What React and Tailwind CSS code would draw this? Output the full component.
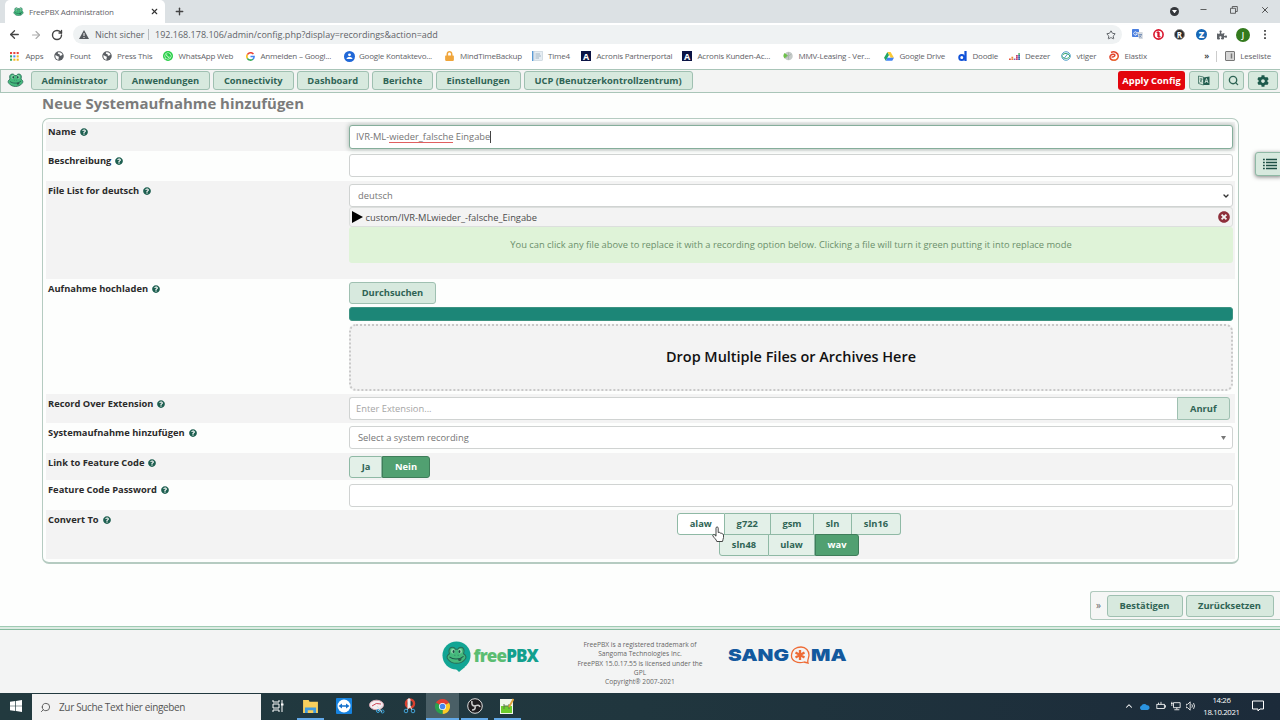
import React from 'react';
import { FaQuestionCircle, FaTimesCircle, FaCog, FaPuzzlePiece, FaWhatsapp, FaLock } from 'react-icons/fa';
import { ArrowLeft, ArrowRight, RotateCw, Star, Search, X, Plus, Minus, ChevronUp, ChevronDown } from 'lucide-react';

const Frog = ({ className = '' }) => (
  <svg viewBox="0 0 32 28" className={`shrink-0 ${className}`}>
    <path d="M5 12C3 7 5 2 9.500 2C12 2 13.500 3 14.500 5H18C19 3 20.500 2 23 2C27 2 29 7 27 12C31 15 32 18 29 21C26 25 21 27 16 27C11 27 6 25 3 21C0 18 1 15 5 12Z" fill="#45b97c" stroke="#2a6b58" strokeWidth="1.600" />
    <ellipse cx="10.500" cy="8" rx="3" ry="3.800" fill="#8fd6ad" />
    <ellipse cx="21.500" cy="8" rx="3" ry="3.800" fill="#8fd6ad" />
    <ellipse cx="11.500" cy="8.500" rx="1.500" ry="2.400" fill="#1d4a44" />
    <ellipse cx="20.500" cy="8.500" rx="1.500" ry="2.400" fill="#1d4a44" />
    <path d="M5 17C10 21 20 22 27 16" fill="none" stroke="#1d5a4c" strokeWidth="1.600" />
    <path d="M18 20.500C19 25 24 24 24 18.500Z" fill="#2d5a4c" />
    <path d="M13 14.500h1M18 14.500h1" stroke="#1d5a4c" strokeWidth="1.200" />
  </svg>
);

const Globe = () => (
  <svg viewBox="0 0 20 20" className="size-[10px]">
    <circle cx="10" cy="10" r="9.500" fill="#5a5e63" />
    <path d="M3 8C6 9 6 11 9 11C11 12 8 15 9 18C4 17 2 13 3 8ZM8 3C11 2 15 3 17 7C15 10 13 8 13 10C10 9 13 6 9 6C8 6 7 4 8 3Z" fill="#fff" />
  </svg>
);

const AppsIcon = () => (
  <svg viewBox="0 0 10 10" className="size-[9px]">
    {['#e8453c', '#e8453c', '#e8453c', '#2fa55a', '#4a8af4', '#f2b921', '#2fa55a', '#f2b921', '#f2b921'].map((c, i) => (
      <rect key={i} x={(i % 3) * 3.7} y={Math.floor(i / 3) * 3.7} width="2.300" height="2.300" fill={c} />
    ))}
  </svg>
);

const WhatsAppIcon = () => (
  <span className="flex size-[10px] items-center justify-center rounded-full bg-[#25cf45] text-white"><FaWhatsapp className="size-[8px]" /></span>
);

const GoogleG = () => (
  <svg viewBox="0 0 20 20" className="size-[9px]">
    <path d="M16.500 4.500A8.200 8.200 0 0 0 3 6" fill="none" stroke="#ea4335" strokeWidth="3.400" />
    <path d="M3 6A8.200 8.200 0 0 0 3 14" fill="none" stroke="#fbbc05" strokeWidth="3.400" />
    <path d="M3 14A8.200 8.200 0 0 0 15.500 16" fill="none" stroke="#34a853" strokeWidth="3.400" />
    <path d="M15.500 16A8 8 0 0 0 18 10H10" fill="none" stroke="#4285f4" strokeWidth="3.400" />
  </svg>
);

const ContactIcon = () => (
  <svg viewBox="0 0 20 20" className="size-[11px]">
    <circle cx="10" cy="10" r="10" fill="#2068d8" />
    <circle cx="10" cy="7" r="2.600" fill="#fff" />
    <path d="M4.500 14.500C5 10 15 10 15.500 14.500Z" fill="#fff" />
  </svg>
);

const NoteIcon = () => (
  <svg viewBox="0 0 22 20" className="h-[10px] w-[11px]">
    <rect x="0" y="0" width="3" height="20" fill="#5b9bd5" />
    <rect x="4" y="1" width="17" height="18" fill="#e6edf3" stroke="#b4c3d0" />
    <path d="M7 6h9M7 10h11M7 14h7" stroke="#8aa0b4" strokeWidth="1.500" />
  </svg>
);

const AcronisIcon = () => (
  <span className="flex size-[10px] items-center justify-center bg-[#0b1445] font-['Open_Sans'] text-[9px] leading-none font-bold text-white">A</span>
);

const LeasingIcon = () => (
  <svg viewBox="0 0 20 20" className="size-[10px]">
    <circle cx="11" cy="10" r="8.500" fill="#c5cbc9" />
    <path d="M3 4L10 9L3 15C0 11 0 8 3 4Z" fill="#6cc04a" />
    <path d="M11 3v14M5 14l12-8" stroke="#a5aeab" strokeWidth="1.500" />
  </svg>
);

const DriveIcon = () => (
  <svg viewBox="0 0 22 20" className="h-[9px] w-[10px]">
    <path d="M7.500 0L0 13L3.800 19.500L11 6.500Z" fill="#22a565" />
    <path d="M7.500 0H14.500L22 13H14.700Z" fill="#fcc934" />
    <path d="M7.300 13H22L18.300 19.500H3.800Z" fill="#4285f4" />
  </svg>
);

const DoodleIcon = () => (
  <svg viewBox="0 0 18 20" className="h-[10px] w-[9px]">
    <circle cx="7.500" cy="13" r="5" fill="none" stroke="#1152d8" strokeWidth="4" />
    <path d="M15 0v20" stroke="#1152d8" strokeWidth="4.500" />
  </svg>
);

const DeezerIcon = () => (
  <svg viewBox="0 0 22 16" className="h-[8px] w-[11px]">
    <path d="M0 14.500h3.600" stroke="#e8503a" strokeWidth="2.600" />
    <path d="M4.800 14.500h3.600M4.800 11h3.600" stroke="#e98b3a" strokeWidth="2.600" />
    <path d="M9.400 14.500h3.600" stroke="#7b4fa5" strokeWidth="2.600" />
    <path d="M14 14.500h3.600M14 11h3.600M14 7.500h3.600" stroke="#c73e70" strokeWidth="2.600" />
    <path d="M18.400 14.500h3.600M18.400 11h3.600M18.400 7.500h3.600" stroke="#3565a8" strokeWidth="2.600" />
    <path d="M18.400 4h3.600" stroke="#3fae5a" strokeWidth="2.600" />
  </svg>
);

const VtigerIcon = () => (
  <svg viewBox="0 0 20 20" className="size-[10px]" fill="none" strokeWidth="2">
    <circle cx="10" cy="10" r="8.500" stroke="#4a9cc7" />
    <path d="M2 9C7 3 13 4 18 10C14 16 8 17 2 11" stroke="#37a86b" />
    <path d="M6 15L14 5" stroke="#4a9cc7" />
  </svg>
);

const ElastixIcon = () => (
  <svg viewBox="0 0 20 20" className="size-[10px]" fill="none">
    <path d="M4 3C11 -0.500 18.500 4 18.500 10C18.500 15.500 14 18.500 10 18.500C4 18.500 1.500 15 2 11C3 7 8 5.500 11 7C13 9 10 12.500 5 12" stroke="#e2452b" strokeWidth="3" />
    <path d="M7 18.500C12 19 16 16 17.500 12" stroke="#f09b2d" strokeWidth="1.500" />
  </svg>
);

const bookmarks = [
  { label: 'Apps', icon: <AppsIcon />, cell: 'w-[44px]', gap: 'w-[15.5px]' },
  { label: 'Fount', icon: <Globe />, cell: 'w-[48px]', gap: 'w-[16px]' },
  { label: 'Press This', icon: <Globe />, cell: 'w-[61px]', gap: 'w-[15px]' },
  { label: 'WhatsApp Web', icon: <WhatsAppIcon />, cell: 'w-[83px]', gap: 'w-[15.5px]' },
  { label: 'Anmelden – Googl...', icon: <GoogleG />, cell: 'w-[97.5px]', gap: 'w-[14.5px]' },
  { label: 'Google Kontaktevo...', icon: <ContactIcon />, cell: 'w-[101.5px]', gap: 'w-[15.5px]' },
  { label: 'MindTimeBackup', icon: <FaLock className="h-[10px] w-[9px] text-[#f0a63c]" />, cell: 'w-[87px]', gap: 'w-[15px]' },
  { label: 'Time4', icon: <NoteIcon />, cell: 'w-[49px]', gap: 'w-[16px]' },
  { label: 'Acronis Partnerportal', icon: <AcronisIcon />, cell: 'w-[101px]', gap: 'w-[15.5px]' },
  { label: 'Acronis Kunden-Ac...', icon: <AcronisIcon />, cell: 'w-[101px]', gap: 'w-[15.5px]' },
  { label: 'MMV-Leasing - Ver...', icon: <LeasingIcon />, cell: 'w-[101px]', gap: 'w-[15.5px]' },
  { label: 'Google Drive', icon: <DriveIcon />, cell: 'w-[74px]', gap: 'w-[15.5px]' },
  { label: 'Doodle', icon: <DoodleIcon />, cell: 'w-[51px]', gap: 'w-[14.5px]' },
  { label: 'Deezer', icon: <DeezerIcon />, cell: 'w-[52px]', gap: 'w-[16px]' },
  { label: 'vtiger', icon: <VtigerIcon />, cell: 'w-[48px]', gap: 'w-[15.5px]' },
  { label: 'Elastix', icon: <ElastixIcon />, cell: 'w-[60px]', gap: 'w-[15.5px]' }
];

const BrowserChrome = () => (
  <div className="h-[69px] bg-white font-['Open_Sans',sans-serif] text-[#5f6368]">
    <div className="flex h-[23px] bg-[#dce1e4]">
      <div className="ml-[5px] flex w-[160px] items-center rounded-t-[5px] bg-white pl-2">
        <Frog className="h-[9px] w-[11px]" />
        <span className="ml-[5px] w-[120px] text-[8px] tracking-[-0.02em] whitespace-nowrap">FreePBX Administration</span>
        <X className="ml-[1px] size-[9px] text-[#333]" strokeWidth={3} />
      </div>
      <Plus className="mt-[6px] ml-[9px] size-[11px] text-[#444]" strokeWidth={3} />
      <div className="ml-auto flex items-start text-[#333]">
        <span className="mt-[7px] flex size-[9px] items-center justify-center rounded-full bg-[#35383c]">
          <svg viewBox="0 0 6 4" className="w-[5px]"><path d="M0 0h6L3 4Z" fill="#fff" /></svg>
        </span>
        <Minus className="mt-[5px] ml-[20px] size-[9px]" strokeWidth={2} />
        <svg viewBox="0 0 8 8" className="mt-[6px] ml-[22px] size-[8px]" fill="none" stroke="#444" strokeWidth=".8">
          <path d="M.5 2.300h5v5h-5ZM2.300 2.300V.5h5v5H5.500" />
        </svg>
        <X className="mt-[5px] mr-[10px] ml-[22px] size-[10px]" strokeWidth={2} />
      </div>
    </div>
    <div className="flex h-[23px] items-center">
      <ArrowLeft className="ml-[8px] size-[13px] text-[#444]" strokeWidth={2.4} />
      <ArrowRight className="ml-[9px] size-[12px] text-[#aaa]" strokeWidth={2.2} />
      <RotateCw className="ml-[9px] size-[12px] text-[#444]" strokeWidth={2.8} />
      <div className="ml-[10px] flex h-[19px] w-[1049px] items-center rounded-full bg-[#eff2f3] pl-[6px]">
        <svg viewBox="0 0 20 18" className="h-[9px] w-[10px]">
          <path d="M10 0L20 18H0Z" fill="#55595e" />
          <path d="M10 6v6M10 14v2" stroke="#fff" strokeWidth="2" />
        </svg>
        <span className="ml-[6px] w-[49px] text-[9px] whitespace-nowrap">Nicht sicher</span>
        <span className="ml-[4px] h-[11px] w-px bg-[#b9bdc1]" />
        <span className="ml-[6px] text-[9px] whitespace-nowrap">192.168.178.106/admin/config.php?display=recordings&amp;action=add</span>
        <Star className="mr-[6px] ml-auto size-[10px]" strokeWidth={2.4} />
      </div>
      <svg viewBox="0 0 22 22" className="ml-[10px] size-[11px]">
        <rect x="0" y="0" width="14" height="16" rx="1.500" fill="#4a7fe0" />
        <path d="M10 6h10a1.500 1.500 0 0 1 1.500 1.500V20H14Z" fill="#d4d9df" />
        <path d="M10 8A3.300 3.300 0 1 0 10 10H7" fill="none" stroke="#fff" strokeWidth="1.600" />
        <path d="M13 11h7M16.500 10v1M19 11q-1 4-5 6M14 13l5 4" fill="none" stroke="#5473a8" strokeWidth="1.200" />
      </svg>
      <svg viewBox="0 0 22 22" className="ml-[10px] size-[11px]" fill="none" stroke="#d9152c">
        <circle cx="11" cy="11" r="9.200" strokeWidth="3.200" />
        <path d="M7 7l3-1v10M12 6v10l3-1M10 11h2" strokeWidth="2.600" />
      </svg>
      <span className="ml-[10px] flex size-[11px] items-center justify-center rounded-full border border-[#999] bg-[#2a2a2a] text-[8px] leading-none font-bold text-white">R</span>
      <span className="ml-[11px] flex size-[11px] items-center justify-center rounded-full bg-[#1767b5] text-[9px] leading-none font-extrabold text-white">Z</span>
      <FaPuzzlePiece className="ml-[10px] size-[10px]" />
      <span className="ml-[9px] flex size-[14px] items-center justify-center rounded-full bg-[#347a1e] text-[8px] leading-none font-semibold text-white">J</span>
      <svg viewBox="0 0 2 10" className="ml-[14px] h-[9px] w-[2px]" fill="#444"><rect width="2" height="2" /><rect y="4" width="2" height="2" /><rect y="8" width="2" height="2" /></svg>
    </div>
    <div className="flex h-[20px] items-center pl-[10px] text-[8px] whitespace-nowrap">
      {bookmarks.map((b) => (
        <div key={b.label} className={`flex shrink-0 items-center ${b.cell}`}>
          <span className={`flex shrink-0 items-center ${b.gap}`}>{b.icon}</span>
          <span className="tracking-[-0.025em]">{b.label}</span>
        </div>
      ))}
      <span className="ml-auto text-[9px] font-semibold text-[#333]">»</span>
      <span className="ml-[7px] h-[11px] w-px bg-[#ccc]" />
      <svg viewBox="0 0 20 20" className="ml-[8px] size-[10px]"><rect x="1" y="1" width="18" height="18" rx="1" fill="#d6d6d6" stroke="#777" strokeWidth="2" /><path d="M13 5v10" stroke="#777" strokeWidth="3" /></svg>
      <span className="mr-[9px] ml-[5px] tracking-[-0.02em]">Leseliste</span>
    </div>
  </div>
);

const btn = 'flex shrink-0 items-center justify-center rounded-[3px] border border-[#9fc0b1] bg-[#d7e9de] text-[9.33px] font-bold text-[#2f6455] whitespace-nowrap';

const navItems = [
  { label: 'Administrator', width: 'w-[87px]' },
  { label: 'Anwendungen', width: 'w-[89px]' },
  { label: 'Connectivity', width: 'w-[80.500px]' },
  { label: 'Dashboard', width: 'w-[72.500px]' },
  { label: 'Berichte', width: 'w-[61px]' },
  { label: 'Einstellungen', width: 'w-[84.500px]' },
  { label: 'UCP (Benutzerkontrollzentrum)', width: 'w-[169px]' }
];

const NavBar = () => (
  <nav className="flex h-[24px] items-start border border-r-0 border-[#a9c5b8] bg-[#f3f4f3] pt-px pl-[6px]">
    <Frog className="mt-[2px] h-[14px] w-[17px]" />
    <div className="ml-[7px] flex gap-[3px]">
      {navItems.map((n) => (
        <button key={n.label} className={`h-[19px] ${btn} ${n.width}`}>{n.label}</button>
      ))}
    </div>
    <div className="ml-auto flex items-center">
      <button className="flex h-[19px] w-[67px] items-center justify-center rounded-[3px] bg-[#e3050d] text-[9.33px] font-bold whitespace-nowrap text-white">Apply Config</button>
      <button className={`ml-[4px] h-[19px] w-[30px] ${btn}`}>
        <svg viewBox="0 0 24 22" className="h-[11px] w-[12px]">
          <path d="M1 2L11 4V20L1 17Z" fill="#d7e9de" stroke="#2f6455" strokeWidth="1.500" />
          <path d="M3 8h6M6 6v3M8 8q-1 5-5 7M4 10l4 5" fill="none" stroke="#2f6455" strokeWidth="1.300" />
          <path d="M11 5L23 3V20H11Z" fill="#245e50" />
          <path d="M14 16L17 7L20 16M15 13h4" fill="none" stroke="#d7e9de" strokeWidth="1.700" />
        </svg>
      </button>
      <button className={`ml-[4px] h-[19px] w-[21px] ${btn}`}><Search className="size-[11px]" strokeWidth={3} /></button>
      <button className={`mr-[2px] ml-[4px] h-[19px] w-[30px] ${btn}`}><FaCog className="size-[12px] text-[#1d5a4c]" /></button>
    </div>
  </nav>
);

const Row = ({ label, height, shaded, children }) => (
  <div className={`flex ${height} ${shaded ? 'bg-[#f3f3f3]' : ''}`}>
    <div className="flex h-[20px] w-[303px] shrink-0 items-center pl-[2px] text-[9.33px] font-bold text-[#2b2b2b]">
      {label}
      <FaQuestionCircle className="ml-[4px] size-[8px] text-[#1d5f50]" />
    </div>
    <div className="w-[884px]">{children}</div>
  </div>
);

const field = 'flex h-[23px] items-center rounded-[3px] border border-[#d0d3d2] bg-white text-[9.33px] text-[#757575] whitespace-nowrap';
const seg = 'flex h-[22px] items-center justify-center border-y border-r border-[#8fb9a5] bg-[#e3f0e8] text-[9.33px] font-bold text-[#2f6455]';
const segOn = 'flex h-[22px] items-center justify-center rounded-r-[3px] border border-[#3f7d5a] bg-[#51a071] text-[9.33px] font-bold text-white';

const RecordingForm = () => (
  <section className="ml-[42px] h-[446px] w-[1197px] rounded-[7px] border border-b-2 border-[#b5cbc1] bg-[#fdfefd] px-[3px] pt-[3px]">
    <Row label="Name" height="h-[29px]" shaded>
      <div className="mt-[2.5px] flex h-[24px] items-center rounded-[3px] border border-[#85ae9b] bg-white pt-px pl-[6px] text-[9.33px] whitespace-nowrap text-[#757575] shadow-[0_0_4px_1px_rgba(80,110,95,0.35)]">
        <span>IVR-ML-<span className="bg-linear-to-t from-[#e06060] from-[1px] to-transparent to-[1px]">wieder_falsche</span> Eingabe</span>
        <span className="h-[12px] w-px bg-[#444]" />
      </div>
    </Row>
    <Row label="Beschreibung" height="h-[30px]">
      <div className={`mt-[3px] ${field}`} />
    </Row>
    <Row label="File List for deutsch" height="h-[98px]" shaded>
      <div className={`mt-[3px] pr-[2px] pl-[8px] ${field}`}>
        deutsch
        <ChevronDown className="ml-auto size-[8px] text-[#333]" strokeWidth={4} />
      </div>
      <div className="flex h-[20px] items-center rounded-[3px] border border-[#dcdfdd] pr-[2px] pl-[2px] text-[9.33px] text-[#4c4c4c]">
        <svg viewBox="0 0 11 12" className="-mt-px h-[12px] w-[11px]"><path d="M0 0L11 6L0 12Z" fill="#000" /></svg>
        <span className="ml-[2.5px] pt-[2px]">custom/IVR-MLwieder_-falsche_Eingabe</span>
        <FaTimesCircle className="-mt-px ml-auto size-[12px] text-[#8e2f3b]" />
      </div>
      <div className="flex h-[36px] items-center justify-center rounded-[3px] bg-[#dff3d8] text-[9.33px] text-[#6b8f6b]">
        You can click any file above to replace it with a recording option below. Clicking a file will turn it green putting it into replace mode
      </div>
    </Row>
    <Row label="Aufnahme hochladen" height="h-[115px]">
      <button className={`mt-[3px] h-[22px] w-[87px] ${btn}`}>Durchsuchen</button>
      <div className="mt-[3px] h-[14px] rounded-[3px] border border-[#3d9382] bg-[#1c8677]" />
      <div className="mt-[3px] flex h-[67px] items-center justify-center rounded-[7px] border-2 border-dotted border-[#c9c9c9] bg-[#f3f3f3] pb-[2px] text-[14.450px] font-semibold text-[#111]">
        Drop Multiple Files or Archives Here
      </div>
    </Row>
    <Row label="Record Over Extension" height="h-[29px]" shaded>
      <div className="mt-[3px] flex">
        <div className={`w-[828px] rounded-r-none border-r-0 pt-px pl-[6px] text-[#a5a5a5]! ${field}`}>Enter Extension...</div>
        <button className={`h-[23px] w-[52.500px] rounded-l-none ${btn}`}>Anruf</button>
      </div>
    </Row>
    <Row label="Systemaufnahme hinzufügen" height="h-[30px]">
      <div className={`mt-[3px] pr-[6px] pl-[8px] ${field}`}>
        Select a system recording
        <svg viewBox="0 0 5 4" className="ml-auto h-[4px] w-[5px]"><path d="M0 0h5L2.500 4Z" fill="#777" /></svg>
      </div>
    </Row>
    <Row label="Link to Feature Code" height="h-[27px]" shaded>
      <div className="mt-[3px] flex">
        <button className={`w-[33px] rounded-l-[3px] border-l pl-px ${seg}`}>Ja</button>
        <button className={`w-[48px] ${segOn}`}>Nein</button>
      </div>
    </Row>
    <Row label="Feature Code Password" height="h-[30px]">
      <div className={`mt-[4px] ${field}`} />
    </Row>
    <Row label="Convert To" height="h-[49px]" shaded>
      <div className="mt-[3px] ml-[328px] flex">
        <button className={`w-[47.500px] rounded-l-[3px] border-l bg-white! ${seg}`}>alaw</button>
        <button className={`w-[46.500px] ${seg}`}>g722</button>
        <button className={`w-[43px] ${seg}`}>gsm</button>
        <button className={`w-[38px] ${seg}`}>sln</button>
        <button className={`w-[49px] rounded-r-[3px] ${seg}`}>sln16</button>
      </div>
      <div className="-mt-px ml-[370px] flex">
        <button className={`w-[50px] rounded-l-[3px] border-l ${seg}`}>sln48</button>
        <button className={`w-[46px] ${seg}`}>ulaw</button>
        <button className={`w-[44px] ${segOn}`}>wav</button>
      </div>
    </Row>
  </section>
);

const Footer = () => (
  <footer className="flex h-[66px] items-start bg-[#f3f4f4]">
    <div className="w-0 shrink-0" />
    <div className="mt-[11px] ml-[442px] flex w-[135px] items-start">
      <span className="relative flex h-[32px] w-[29px] shrink-0 justify-center pt-[5px]">
        <svg viewBox="0 0 29 31" className="absolute top-0 left-0 h-[31px] w-[29px]"><circle cx="14.500" cy="14.500" r="14" fill="#12a594" /><path d="M12 26H23L17 31Z" fill="#12a594" /></svg>
        <Frog className="relative h-[18px] w-[21px]" />
      </span>
      <span className="mt-[3px] ml-[2.5px] font-['Open_Sans'] text-[17px] leading-[24px] font-extrabold tracking-[-0.05em] text-[#5bbd72]">free<span className="text-[#12a08e]">PBX</span></span>
    </div>
    <div className="mt-[10px] w-[126px] text-center text-[6.650px] leading-[9.300px] whitespace-nowrap text-[#666]">
      <p>FreePBX is a registered trademark of</p>
      <p>Sangoma Technologies Inc.</p>
      <p>FreePBX 15.0.17.55 is licensed under the</p>
      <p>GPL</p>
      <p>Copyright® 2007-2021</p>
    </div>
    <div className="mt-[15px] ml-[24.500px] flex h-[20px] items-center font-[Inter] text-[16.5px] leading-none font-black text-[#13599e]">
      <span className="w-[62.500px]"><span className="inline-block origin-left scale-x-[1.25]">SANG</span></span>
      <svg viewBox="0 0 20 18" className="h-[18px] w-[20px]" fill="none" stroke="#ee6b35">
        <path d="M14 16C8 18 1 15 1.500 9C2 3 7 1 11 1C16 1 19 5 19 9C19 12 17 14 18 17L14 16" strokeWidth="1.300" />
        <path d="M10 4v10M5.500 6.500l9 5M14.500 6.500l-9 5" strokeWidth="2.300" />
      </svg>
      <span className="ml-px"><span className="inline-block origin-left scale-x-[1.23]">MA</span></span>
    </div>
  </footer>
);

const TaskItem = ({ children, className = '' }) => (
  <div className={`relative flex h-[27px] w-[33px] shrink-0 items-center justify-center pb-px ${className}`}>{children}</div>
);

const Running = ({ className = 'w-[27px]' }) => <span className={`absolute bottom-0 h-[2px] bg-[#63a9e8] ${className}`} />;

const Taskbar = () => (
  <div className="flex h-[27px] items-center bg-gradient-to-r from-[#223a3f] via-[#20363e] to-[#1c2b3a] font-['Open_Sans'] text-white">
    <div className="flex w-[32px] justify-center pb-px">
      <svg viewBox="0 0 12 12" className="size-[12px]" fill="#fff"><path d="M0 1.700L5.300 1V5.700H0ZM6 .9L12 0V5.700H6ZM0 6.300H5.300V11L0 10.300ZM6 6.300H12V12L6 11.100Z" /></svg>
    </div>
    <div className="flex h-[26px] w-[229px] items-center bg-[#f2f2f2] pt-px pl-[8px] text-[10px] text-[#555]">
      <Search className="size-[11px] -scale-x-100" strokeWidth={2} />
      <span className="ml-[8px] tracking-[-0.035em]">Zur Suche Text hier eingeben</span>
    </div>
    <TaskItem>
      <svg viewBox="0 0 12 12" className="size-[12px]" fill="none" stroke="#fff"><path d="M1 0v2h6v-2M1 12v-2h6v2M1 4h6v4h-6ZM10 0v12" /><path d="M9 4.500h2.500" strokeWidth="2" /></svg>
    </TaskItem>
    <TaskItem>
      <svg viewBox="0 0 16 14" className="h-[13px] w-[15px]"><path d="M0 0h6l1 2h9v12H0Z" fill="#f7cf5d" /><path d="M2 14V8h12v6h-3v-3H5v3Z" fill="#3f9be0" /></svg>
      <Running />
    </TaskItem>
    <TaskItem>
      <svg viewBox="0 0 16 16" className="size-[16px]"><rect width="16" height="16" rx="1" fill="#1683e0" /><circle cx="8" cy="8" r="6.500" fill="#fff" /><path d="M2.500 8L6 5.500V7.300h4V5.500L13.500 8L10 10.500V8.700H6v1.800Z" fill="#1571cc" /></svg>
    </TaskItem>
    <TaskItem>
      <svg viewBox="0 0 16 15" className="h-[15px] w-[16px]"><ellipse cx="7.500" cy="6" rx="7" ry="4.800" fill="#f5eef0" stroke="#d4a6b2" /><path d="M3 7Q7 3 12 5" stroke="#cc4455" fill="none" /><path d="M8 7l5 6M13 7l-4 5" stroke="#ddd" /><circle cx="9" cy="12" r="1.500" fill="none" stroke="#3aa5dd" /><circle cx="13.500" cy="12.500" r="1.500" fill="none" stroke="#3aa5dd" /></svg>
    </TaskItem>
    <TaskItem className="pr-[2px]">
      <svg viewBox="0 0 14 16" className="h-[16px] w-[14px]" fill="none"><circle cx="8" cy="5.500" r="4" stroke="#d8412f" strokeWidth="2.500" /><path d="M6 1v9l2-1V1ZM8 8l2 4M7 9l-2 3" fill="#eee" stroke="#eee" /><circle cx="4" cy="13" r="1.800" stroke="#43a3d7" /><circle cx="11" cy="13" r="1.800" stroke="#43a3d7" /></svg>
    </TaskItem>
    <TaskItem className="bg-[#4a5f66]">
      <svg viewBox="0 0 16 16" className="size-[15px]"><path d="M8 8L1.070 4A8 8 0 0 1 14.930 4Z" fill="#e33e33" /><path d="M8 8L14.930 4A8 8 0 0 1 8 16Z" fill="#fbc926" /><path d="M8 8L8 16A8 8 0 0 1 1.070 4Z" fill="#2aa14d" /><circle cx="8" cy="8" r="3.800" fill="#fff" /><circle cx="8" cy="8" r="3" fill="#4687f0" /></svg>
      <Running className="w-full" />
    </TaskItem>
    <TaskItem className="pr-[2px]">
      <svg viewBox="0 0 16 16" className="size-[16px]"><circle cx="8" cy="8" r="7.300" fill="#1f1d20" stroke="#ddd" /><path d="M8 8Q4 8 5 3M8 8Q12 6 13 9M8 8Q9 12 5 12" stroke="#ccc" strokeWidth="1.600" fill="none" /></svg>
      <Running />
    </TaskItem>
    <TaskItem className="pr-[3px]">
      <svg viewBox="0 0 14 16" className="h-[16px] w-[14px]"><path d="M0 1h13v15H0Z" fill="#f2f6ec" /><path d="M1 8h11v7H1Z" fill="#6ccc2c" /><path d="M4 6v5M4 8h5M9 6v5" stroke="#5d7a4c" /><path d="M13.500 1L9 9" stroke="#e0a43a" strokeWidth="1.800" /></svg>
      <Running />
    </TaskItem>
    <div className="ml-auto flex items-center pb-px">
      <ChevronUp className="size-[10px]" strokeWidth={2.5} />
      <svg viewBox="0 0 14 9" className="ml-[5px] h-[7px] w-[11px]"><path d="M3 9A3 3 0 0 1 3 3.500A4 4 0 0 1 10 3A3 3 0 0 1 11 9Z" fill="#2b94e0" /></svg>
      <svg viewBox="0 0 12 12" className="ml-[6px] size-[10px]" fill="none" stroke="#fff"><rect x="1" y="4" width="9" height="5" /><path d="M10.500 5.500h1v2h-1M3 2v2M6 1v3" /></svg>
      <svg viewBox="0 0 12 12" className="ml-[5px] size-[10px]" fill="none" stroke="#fff"><path d="M3 2h8v6H3ZM7 8v2M4 10.500h6M1 1v5M0 3h2" /></svg>
      <svg viewBox="0 0 12 12" className="ml-[5px] size-[10px]" fill="none" stroke="#fff"><path d="M0 4h2l3-3v10l-3-3H0ZM7 4q1.500 2 0 4M9 2.500q2.500 3.500 0 7" /></svg>
      <div className="ml-[6px] w-[39px] text-center text-[7.800px] leading-[12px] tracking-[-0.045em] whitespace-nowrap"><p>14:26</p><p>18.10.2021</p></div>
      <svg viewBox="0 0 12 12" className="mr-[16px] ml-[11px] size-[12px]" fill="none" stroke="#fff"><path d="M.5 1h11v8H8L6 11V9H.5Z" /></svg>
    </div>
  </div>
);

export default function App() {
  return (
    <div className="relative h-[720px] w-[1280px] overflow-hidden bg-[#fdfefd] font-['Open_Sans',sans-serif]">
      <BrowserChrome />
      <NavBar />
      <main className="h-[534px] border-b border-[#9fcbb3]">
        <h1 className="h-[25px] pl-[42px] text-[14.930px] leading-[20px] font-bold text-[#7b7b7b]">Neue Systemaufnahme hinzufügen</h1>
        <RecordingForm />
        <div className="mt-[27px] ml-auto flex h-[29px] w-[190px] items-center rounded-l-[3px] border border-r-0 border-[#b0c9bd] bg-[#f5f6f5] pl-[5px] text-[10px] text-[#666]">
          <span className="w-[10.500px]">»</span>
          <button className={`h-[22px] w-[76px] ${btn}`}>Bestätigen</button>
          <button className={`ml-[3px] h-[22px] w-[88px] ${btn}`}>Zurücksetzen</button>
        </div>
      </main>
      <div className="h-[3px] border-b border-[#86bb9f] bg-[#dcebe2]" />
      <div className="h-[63px] overflow-hidden">
        <Footer />
      </div>
      <Taskbar />

      {/* slide-out side menu handle */}
      <div className="absolute top-[152px] -right-[2px] flex h-[24px] w-[27px] items-center rounded-l-[3px] border border-[#8fb9a5] bg-[#d7e9de] pl-[7px] shadow-[0_1px_4px_rgba(0,0,0,0.5)]">
        <svg viewBox="0 0 14 12" className="h-[12px] w-[14px]" stroke="#1d4f45" strokeWidth="1.700">
          <path d="M0 1.500h1.800M3 1.500h11M0 4.500h1.800M3 4.500h11M0 7.500h1.800M3 7.500h11M0 10.500h1.800M3 10.500h11" />
        </svg>
      </div>

      {/* hand cursor over the alaw button */}
      <svg viewBox="0 0 12 16" className="absolute top-[526px] left-[712px] h-[16px] w-[12px]">
        <path d="M4 9V2.200C4 .4 6.200.4 6.200 2.200V6.500C7.500 6 8 6.500 8.200 7.200C9.200 6.700 9.800 7.200 10 8C11 7.600 11.500 8.200 11.500 9V11.500C11.500 13 10.500 14 10.500 15.500H4.800C4.500 13.500 2 12 .8 9.800C.5 8.500 2 8 2.800 9L4 10.200Z" fill="#fff" stroke="#333" strokeWidth=".9" />
      </svg>
    </div>
  );
}
